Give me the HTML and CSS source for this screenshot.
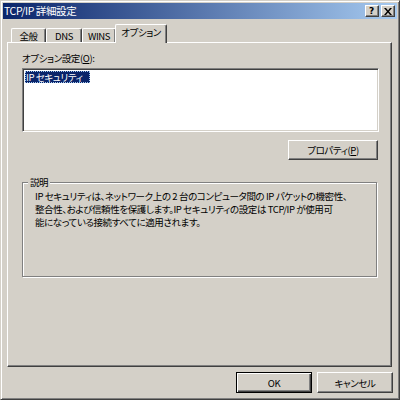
FILE: index.html
```html
<!DOCTYPE html>
<html lang="ja">
<head>
<meta charset="utf-8">
<title>TCP/IP 詳細設定</title>
<link rel="stylesheet" href="styles.css">
</head>
<body>
<div class="window">
  <div class="titlebar">
    <span class="title">TCP/IP 詳細設定</span>
    <div class="tbtns">
      <span class="tbtn help">?</span>
      <span class="tbtn close"><svg width="8" height="7" viewBox="0 0 8 7"><path d="M0 0h2l2 2.5L6 0h2L5 3.5 8 7H6L4 4.5 2 7H0l3-3.5z" fill="#000"/></svg></span>
    </div>
  </div>
  <div class="body">
    <div class="tabs">
      <div class="tab t1">全般</div>
      <div class="tab t2">DNS</div>
      <div class="tab t3">WINS</div>
      <div class="tab active">オプション</div>
    </div>
    <div class="panel">
      <div class="label">オプション設定(<u>O</u>):</div>
      <div class="listbox"><span class="item">IP セキュリティ</span></div>
      <div class="prop-row"><button class="btn prop">プロパティ(<u>P</u>)</button></div>
      <div class="group">
        <span class="legend">説明</span>
        <div class="desc">
          <div class="line">IP セキュリティは、ネットワーク上の 2 台のコンピュータ間の IP パケットの機密性、</div>
          <div class="line">整合性、および信頼性を保護します。IP セキュリティの設定は TCP/IP が使用可</div>
          <div class="line">能になっている接続すべてに適用されます。</div>
        </div>
      </div>
    </div>
    <div class="footer">
      <button class="btn default">OK</button>
      <button class="btn">キャンセル</button>
    </div>
  </div>
</div>
</body>
</html>
```

FILE: styles.css
```css
* { box-sizing: border-box; }
html, body { margin: 0; padding: 0; background: #d4d0c8; }
body {
  font-family: "Noto Sans CJK JP", "Liberation Sans", sans-serif;
  font-size: 9.5px;
  letter-spacing: -0.4px;
  font-feature-settings: "palt";
  color: #000;
}
.window {
  width: 400px;
  height: 400px;
  background: #d4d0c8;
  border: 1px solid;
  border-color: #d4d0c8 #404040 #404040 #d4d0c8;
  box-shadow: inset 1px 1px 0 #fff, inset -1px -1px 0 #808080;
  padding: 2px;
  display: flex;
  flex-direction: column;
}
.titlebar {
  height: 16px;
  background: linear-gradient(to right, #0a246a, #a6caf0);
  display: flex;
  align-items: center;
  justify-content: space-between;
  padding: 0 2px 0 1px;
}
.title {
  color: #fff;
  font-size: 10.5px;
  line-height: 16px;
  letter-spacing: -0.4px;
}
.tbtns { display: flex; gap: 2px; }
.tbtn {
  width: 14px;
  height: 12px;
  background: #d4d0c8;
  border: 1px solid;
  border-color: #fff #404040 #404040 #fff;
  box-shadow: inset -1px -1px 0 #808080;
  display: flex;
  align-items: center;
  justify-content: center;
}
.help {
  font-family: "DejaVu Sans", sans-serif;
  font-weight: bold;
  font-size: 9px;
  line-height: 10px;
  letter-spacing: 0;
  padding-right: 1px;
}
.close svg { display: block; margin-right: 1px; }
.body {
  flex: 1;
  padding: 5px 5px 0 4px;
  display: flex;
  flex-direction: column;
}
.tabs {
  display: flex;
  align-items: flex-end;
  height: 18px;
  padding-left: 4px;
  position: relative;
  z-index: 1;
}
.tab {
  height: 14px;
  border-top: 1px solid #fff;
  border-left: 1px solid #fff;
  border-right: 1px solid #404040;
  border-radius: 2px 2px 0 0;
  box-shadow: inset -1px 0 0 #808080;
  display: flex;
  align-items: center;
  justify-content: center;
  line-height: 12px;
  padding-top: 1px;
}
.t1 { width: 35px; }
.t2 { width: 36px; }
.t3 { width: 34px; }
.active {
  width: 52px;
  height: 19px;
  margin-left: -1px;
  margin-bottom: -1px;
  background: #d4d0c8;
  padding-top: 0;
  padding-bottom: 4px;
}
.panel {
  width: 385px;
  height: 325px;
  border: 1px solid;
  border-color: #fff #404040 #404040 #fff;
  box-shadow: inset -1px -1px 0 #808080;
  padding: 9px 12px 0 14px;
}
.label { line-height: 12px; height: 12px; }
.listbox {
  margin-top: 4px;
  height: 64px;
  background: #fff;
  border: 1px solid;
  border-color: #808080 #fff #fff #808080;
  box-shadow: inset 1px 1px 0 #404040, inset -1px -1px 0 #d4d0c8;
  padding: 1px 2px;
}
.item {
  display: inline-block;
  background: #0a246a;
  color: #fff;
  line-height: 12px;
  height: 12px;
  padding: 0 2px 0 1px;
  width: 65px;
  outline: 1px dotted #a6caf0;
  outline-offset: -1px;
}
.prop-row {
  display: flex;
  justify-content: flex-end;
  margin-top: 8px;
  padding-right: 1px;
}
.btn {
  font: inherit;
  letter-spacing: inherit;
  font-feature-settings: "palt";
  color: #000;
  background: #d4d0c8;
  border: 1px solid;
  border-color: #fff #404040 #404040 #fff;
  box-shadow: inset -1px -1px 0 #808080;
  height: 20px;
  padding: 0;
  line-height: 12px;
}
.prop { width: 90px; }
.group {
  position: relative;
  margin-top: 22px;
  width: 355px;
  height: 95px;
  border: 1px solid #808080;
  box-shadow: 1px 1px 0 #fff, inset 1px 1px 0 #fff;
  padding: 7px 10px 0 12px;
}
.legend {
  position: absolute;
  top: -7px;
  left: 5px;
  padding: 0 2px;
  background: #d4d0c8;
  line-height: 12px;
}
.desc {
  display: flex;
  flex-direction: column;
}
.line {
  height: 13px;
  line-height: 13px;
  white-space: nowrap;
}
.footer {
  display: flex;
  justify-content: flex-end;
  gap: 5px;
  margin-top: 5px;
  margin-right: -1px;
}
.footer .btn { width: 76px; height: 21px; }
.default {
  border: 1px solid #000;
  box-shadow: inset 1px 1px 0 #fff, inset -1px -1px 0 #404040, inset -2px -2px 0 #808080;
}
```
